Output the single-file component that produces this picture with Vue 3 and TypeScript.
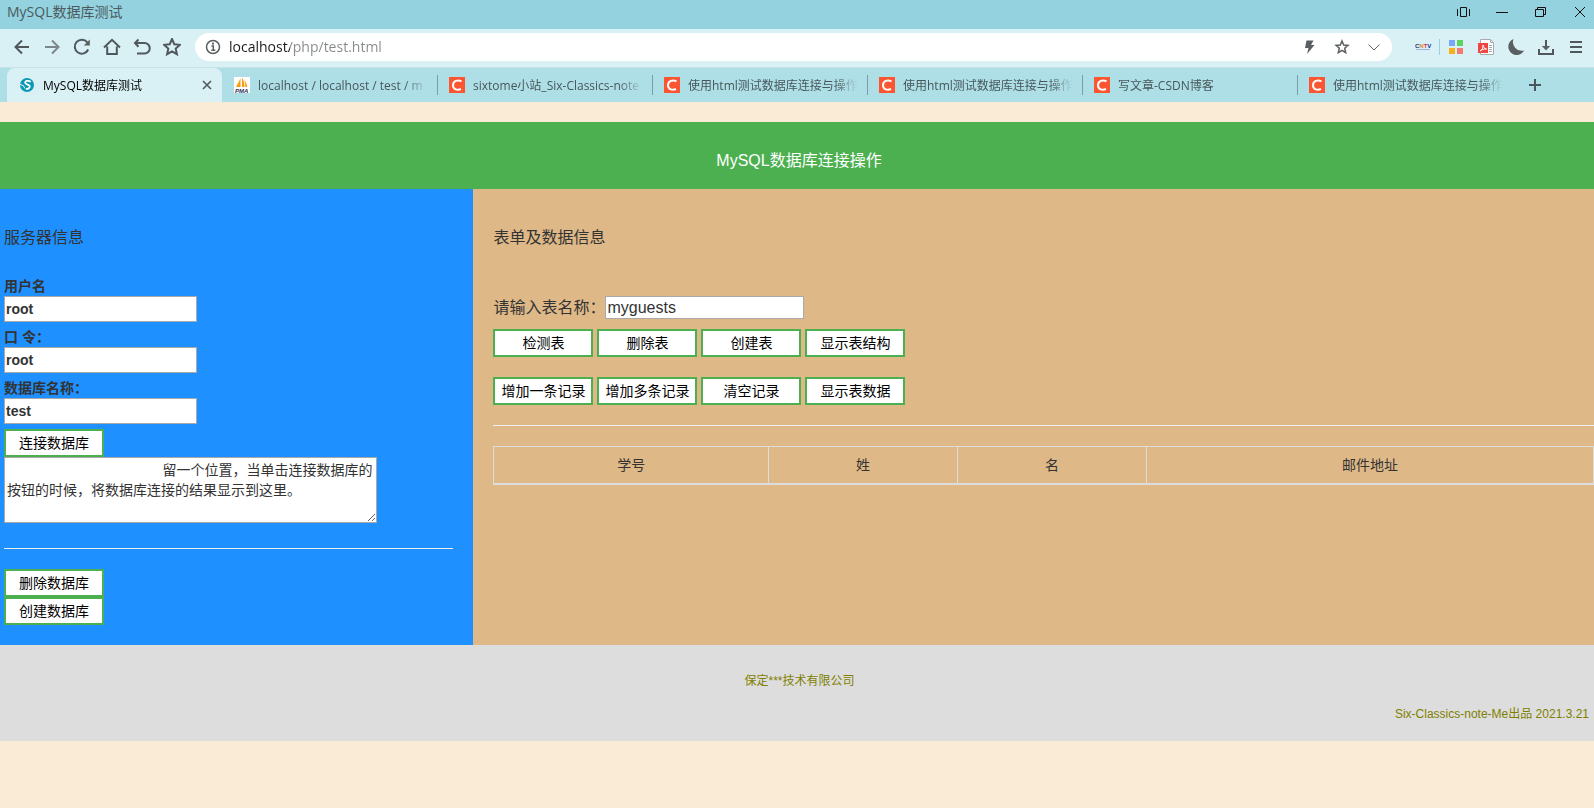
<script setup lang="ts">
import { ref } from 'vue'

interface Tab {
  title: string
  icon: 'globe' | 'pma' | 'csdn'
}

interface Field {
  id: string
  label: string
  value: string
}

const address = ref('localhost/php/test.html')
const tabs: Tab[] = [
  { title: 'MySQL数据库测试', icon: 'globe' },
  { title: 'localhost / localhost / test / m', icon: 'pma' },
  { title: 'sixtome小站_Six-Classics-note', icon: 'csdn' },
  { title: '使用html测试数据库连接与操作', icon: 'csdn' },
  { title: '使用html测试数据库连接与操作', icon: 'csdn' },
  { title: '写文章-CSDN博客', icon: 'csdn' },
  { title: '使用html测试数据库连接与操作', icon: 'csdn' },
]
const activeTab = ref(0)

const fields = ref<Field[]>([
  { id: 'user', label: '用户名', value: 'root' },
  { id: 'pass', label: '口 令：', value: 'root' },
  { id: 'dbname', label: '数据库名称：', value: 'test' },
])
const result = ref(' '.repeat(40) + '留一个位置，当单击连接数据库的按钮的时候，将数据库连接的结果显示到这里。')
const tableName = ref('myguests')
const actionRows: string[][] = [
  ['检测表', '删除表', '创建表', '显示表结构'],
  ['增加一条记录', '增加多条记录', '清空记录', '显示表数据'],
]
const columns: string[] = ['学号', '姓', '名', '邮件地址']
</script>

<template>
  <div class="window">
    <div class="titlebar">
      <span class="window-title">MySQL数据库测试</span>
      <div class="window-controls">
        <button type="button" aria-label="分屏">
          <svg width="16" height="16" viewBox="0 0 16 16"><path d="M5.5 3.5h6v9h-6zM2.5 5v7M14.5 5v7" /></svg>
        </button>
        <button type="button" aria-label="最小化">
          <svg width="16" height="16" viewBox="0 0 16 16"><path d="M2 8.5h12" /></svg>
        </button>
        <button type="button" aria-label="还原">
          <svg width="16" height="16" viewBox="0 0 16 16"><path d="M2.5 5.5h8v7h-8zM4.5 5.5v-2h8v7h-2" /></svg>
        </button>
        <button type="button" aria-label="关闭窗口">
          <svg width="16" height="16" viewBox="0 0 16 16"><path d="M3 3l10 10M13 3L3 13" /></svg>
        </button>
      </div>
    </div>

    <div class="toolbar">
      <button type="button" class="tool" aria-label="后退">
        <svg width="18" height="18" viewBox="0 0 18 18"><path d="M16 9H3M9 2.5L2.5 9l6.5 6.5" /></svg>
      </button>
      <button type="button" class="tool faded" aria-label="前进">
        <svg width="18" height="18" viewBox="0 0 18 18"><path d="M2 9h13M9 2.5L15.5 9 9 15.5" /></svg>
      </button>
      <button type="button" class="tool" aria-label="刷新">
        <svg width="18" height="18" viewBox="0 0 18 18"><path d="M15.200 11.500A7 7 0 1 1 14.300 4.300" /><path class="solid" d="M16.800 1.500v6h-6z" /></svg>
      </button>
      <button type="button" class="tool" aria-label="主页">
        <svg width="18" height="18" viewBox="0 0 18 18"><path d="M1 9.500L9 1.800l8 7.700M4.200 8.500v7.500h9.600V8.500" /></svg>
      </button>
      <button type="button" class="tool" aria-label="撤销">
        <svg width="18" height="18" viewBox="0 0 18 18"><path d="M2.500 5H11.500a5 5 0 0 1 0 10.500H4M5.500 1.500L2 5l3.500 3.800" /></svg>
      </button>
      <button type="button" class="tool" aria-label="收藏夹">
        <svg width="18" height="18" viewBox="0 0 18 18"><path d="M9 1l2.300 5.200 5.700.6-4.300 3.800 1.200 5.600L9 13.300l-4.900 2.900 1.200-5.600L1 6.800l5.700-.6z" /></svg>
      </button>

      <div class="address">
        <svg class="info" width="16" height="16" viewBox="0 0 16 16"><circle cx="8" cy="8" r="6.500" /><path d="M6.500 7H8.300v4M6.300 11.200h4" /><circle class="solid" cx="8" cy="4.700" r="1.100" /></svg>
        <input v-model="address" type="text" aria-label="地址" />
        <button type="button" aria-label="极速模式">
          <svg width="16" height="16" viewBox="0 0 16 16"><path class="fill" d="M4.500 1.500h7L9 6h3.500L5 15l1.500-6H3z" /></svg>
        </button>
        <button type="button" aria-label="收藏">
          <svg width="16" height="16" viewBox="0 0 16 16"><path d="M8 2l1.700 4 4.300.4-3.300 2.900 1 4.300L8 11.300l-3.700 2.300 1-4.300L2 6.400 6.300 6z" /></svg>
        </button>
        <button type="button" aria-label="展开">
          <svg width="16" height="16" viewBox="0 0 16 16"><path class="thin" d="M2.500 5.500L8 11l5.500-5.500" /></svg>
        </button>
      </div>

      <button type="button" class="tool" aria-label="CNTV">
        <svg class="plain" width="18" height="18" viewBox="0 0 18 18">
          <text class="cntv" x="1" y="10"><tspan fill="#12319b">C</tspan><tspan fill="#e08a1c">N</tspan><tspan fill="#d33450">T</tspan><tspan fill="#12319b">V</tspan></text>
          <path stroke="#9fb4dc" d="M2 11.500h14" />
        </svg>
      </button>
      <span class="divider"></span>
      <button type="button" class="tool" aria-label="应用">
        <svg class="plain" width="18" height="18" viewBox="0 0 18 18"><path fill="#76a7fa" d="M2 2h6v6H2z" /><path fill="#5fd35f" d="M10 2h6v6h-6z" /><path fill="#f6b01a" d="M2 10h6v6H2z" /><path fill="#f47b70" d="M10 10h6v6h-6z" /></svg>
      </button>
      <button type="button" class="tool" aria-label="PDF">
        <svg class="plain" width="18" height="18" viewBox="0 0 18 18">
          <path fill="#fff" stroke="#aaa" d="M3.500 1.500h10l3 3v12h-13z" />
          <path stroke="#aaa" fill="none" d="M12 7.500h3M12 9.500h3M12 11.500h3M12 13.500h3M13.500 1.500v3h3" />
          <path fill="#ee4640" d="M1 5h10v10H1z" />
          <path stroke="#fff" fill="none" d="M3 13c2-1 3.500-3.500 3-6C6 9 7.500 10.800 9.500 11 7 10.800 5 11.500 3 13z" />
        </svg>
      </button>
      <button type="button" class="tool" aria-label="夜间模式">
        <svg width="18" height="18" viewBox="0 0 18 18"><path class="fill" d="M6.500 1A8.300 8.300 0 1 0 17 12.500 8.800 8.800 0 0 1 6.500 1z" /></svg>
      </button>
      <button type="button" class="tool" aria-label="下载">
        <svg width="18" height="18" viewBox="0 0 18 18"><path d="M2 11v5h14v-5M9 2v7" /><path class="fill" d="M4.800 8h8.400L9 12.500z" /></svg>
      </button>
      <button type="button" class="tool" aria-label="菜单">
        <svg width="18" height="18" viewBox="0 0 18 18"><path d="M3 4h12M3 9h12M3 14h12" /></svg>
      </button>
    </div>

    <div class="tabs">
      <div v-for="(tab, i) in tabs" :key="i" class="tab" :class="{ active: i === activeTab }">
        <button type="button" class="tab-main" @click="activeTab = i">
          <svg v-if="tab.icon === 'globe'" width="16" height="16" viewBox="0 0 16 16">
            <circle cx="8" cy="8" r="7" fill="#0a9ab5" />
            <path d="M11.800 4.800C9 3 5.500 4 6.300 6s4.700 1.200 4.500 3.500-2.800 2.500-3.800 2.200" fill="none" stroke="#fff" stroke-width="1.800" />
            <path d="M1.200 7.500l3 1L6 11.500" fill="none" stroke="#fff" />
          </svg>
          <svg v-else-if="tab.icon === 'pma'" width="16" height="16" viewBox="0 0 16 16">
            <path fill="#fff" d="M0 0h16v16H0z" />
            <path fill="#f89c0e" d="M6.500 1.500L2 10h4.500zM8 .5V10h2.500C10.500 6 9.500 3 8 .5zM10 3c2 2 3 4.500 3.300 7h-2C11.300 7.500 11 5 10 3z" />
            <text class="pma" x="1" y="16">PMA</text>
          </svg>
          <svg v-else width="16" height="16" viewBox="0 0 16 16">
            <path fill="#fc5531" d="M0 0h16v16H0z" />
            <path d="M12.500 4.300C9 2.500 4 3.500 4 8.300c0 4.300 4.500 5.200 8 3.700" fill="none" stroke="#fff" stroke-width="2" />
          </svg>
          <span>{{ tab.title }}</span>
        </button>
        <button v-if="i === activeTab" type="button" class="tab-close" aria-label="关闭标签">
          <svg width="10" height="10" viewBox="0 0 10 10"><path d="M1 1l8 8M9 1L1 9" /></svg>
        </button>
      </div>
      <button type="button" class="tab-add" aria-label="新标签">
        <svg width="12" height="12" viewBox="0 0 12 12"><path d="M6 0v12M0 6h12" /></svg>
      </button>
    </div>

    <main class="page">
      <header class="banner">MySQL数据库连接操作</header>

      <div class="columns">
        <section class="server">
          <h2>服务器信息</h2>
          <div v-for="f in fields" :key="f.id" class="field">
            <label :for="f.id">{{ f.label }}</label>
            <input :id="f.id" v-model="f.value" type="text" />
          </div>
          <button type="button" class="action">连接数据库</button>
          <textarea v-model="result" rows="3" aria-label="连接结果" spellcheck="false"></textarea>
          <hr />
          <button type="button" class="action">删除数据库</button>
          <button type="button" class="action">创建数据库</button>
        </section>

        <section class="data">
          <h2>表单及数据信息</h2>
          <div class="table-name">
            <label for="tablename">请输入表名称：</label>
            <input id="tablename" v-model="tableName" type="text" />
          </div>
          <div v-for="(row, r) in actionRows" :key="r" class="actions">
            <button v-for="name in row" :key="name" type="button" class="action">{{ name }}</button>
          </div>
          <hr />
          <table>
            <thead>
              <tr>
                <th v-for="c in columns" :key="c" scope="col">{{ c }}</th>
              </tr>
            </thead>
          </table>
        </section>
      </div>

      <footer>
        <p class="company">保定***技术有限公司</p>
        <p class="credit">Six-Classics-note-Me出品 2021.3.21</p>
      </footer>
    </main>
  </div>
</template>

<style>
body {
  margin: 0;
  background: #faebd7;
}
</style>

<style scoped>
.window,
.window * {
  box-sizing: border-box;
}

.window {
  font-family: "Open Sans", "Noto Sans CJK SC", sans-serif;
}

button {
  padding: 0;
  border: 0;
  background: none;
  font-family: inherit;
}

svg {
  flex: none;
  display: block;
}

/* browser frame */
.titlebar {
  display: flex;
  align-items: center;
  justify-content: space-between;
  height: 29px;
  padding: 0 0 5px 7px;
  background: #93d2de;
  color: #4c5a5e;
  font-size: 14px;
  line-height: 20px;
}

.window-controls {
  display: flex;
  gap: 11px;
}

.window-controls button {
  display: flex;
  justify-content: center;
  width: 28px;
}

.window-controls path {
  fill: none;
  stroke: #111;
}

.toolbar {
  display: flex;
  align-items: center;
  padding: 4px 3px 6px 7px;
  border-bottom: 1px solid #c8e2e9;
  background: #d9f0f4;
}

.tool {
  display: flex;
  flex: none;
  justify-content: center;
  width: 30px;
}

.tool svg:not(.plain) path {
  fill: none;
  stroke: #50585b;
  stroke-width: 2;
}

.tool.faded svg:not(.plain) path {
  stroke: #7d878a;
}

.tool svg:not(.plain) path.solid,
.tool svg:not(.plain) path.fill,
.address path.fill {
  fill: #5a5f61;
  stroke: none;
}

.divider {
  width: 1px;
  height: 16px;
  margin: 0 1px;
  background: #93d2de;
}

.cntv {
  font: bold 6px "Liberation Sans", sans-serif;
}

.address {
  display: flex;
  flex: 1;
  align-items: center;
  height: 28px;
  margin: 0 16px 0 8px;
  padding: 0 2px 0 10px;
  border-radius: 14px;
  background: #fff;
}

.address svg {
  fill: none;
  stroke: #5a5f61;
  stroke-width: 1.5;
}

.address .thin {
  stroke-width: 1;
}

.address .solid {
  fill: #5a5f61;
  stroke: none;
}

/* host name is darker than the path behind it */
.address input {
  flex: 1;
  min-width: 0;
  height: 24px;
  margin-left: 8px;
  padding: 0;
  border: 0;
  outline: 0;
  background: linear-gradient(90deg, #1c1c1c 61px, #85898b 61px);
  background-clip: text;
  color: transparent;
  font: 14px/24px "Open Sans", sans-serif;
}

.address button {
  display: flex;
  justify-content: center;
  width: 32px;
}

.tabs {
  display: flex;
  padding-left: 7px;
  background: #aedfe7;
}

.tab {
  position: relative;
  display: flex;
  flex: 0 1 215px;
  align-items: center;
  min-width: 0;
  height: 34px;
  padding: 0 9px 0 12px;
}

.tab::after {
  content: "";
  position: absolute;
  top: 7px;
  right: -1px;
  width: 1px;
  height: 20px;
  background: #7d9da3;
}

.tab.active::after,
.tab:nth-last-child(2)::after {
  display: none;
}

.tab.active {
  border-radius: 8px 8px 0 0;
  background: #d9f0f4;
}

.tab-main {
  display: flex;
  flex: 1;
  align-items: center;
  gap: 8px;
  min-width: 0;
  color: #47575b;
  font-size: 12px;
  line-height: 20px;
}

.tab-main span {
  flex: 1;
  padding-top: 2px;
  overflow: hidden;
  text-align: left;
  white-space: nowrap;
  mask-image: linear-gradient(90deg, #000 calc(100% - 24px), transparent);
}

.active .tab-main {
  color: #000;
}

.pma {
  fill: #2f2f55;
  font: italic bold 6px "Liberation Sans", sans-serif;
}

.tab-close {
  margin-right: 1px;
}

.tab-close path {
  stroke: #50585b;
  stroke-width: 1.6;
}

.tab-add {
  display: flex;
  align-items: center;
  margin-left: 17px;
}

.tab-add path {
  stroke: #47575b;
  stroke-width: 2;
}

/* page */
.page {
  padding: 20px 0;
  color: #333;
  font-family: "Liberation Sans", "Noto Sans CJK SC", sans-serif;
  font-size: 14px;
  line-height: 20px;
}

.banner {
  padding: 27px 0 16px 4px;
  background: #4caf50;
  color: #fff;
  font-size: 16px;
  line-height: 24px;
  text-align: center;
}

.columns {
  display: grid;
  grid-template-columns: 29.7% 1fr;
}

h2 {
  margin: 0 0 26px;
  font-size: 16px;
  font-weight: normal;
  line-height: 24px;
}

hr {
  height: 1px;
  margin: 20px 0;
  border: 0;
  background: #eee;
}

.server {
  padding: 37px 20px 20px 4px;
  background: #1e90ff;
}

.field {
  display: flex;
  flex-direction: column;
  align-items: flex-start;
  margin-bottom: 5px;
  font-weight: bold;
}

.page input,
textarea {
  border: 1px solid #a9a9a9;
  outline: 0;
  background: #fff;
  color: #333;
}

.field input {
  width: 193px;
  height: 26px;
  padding: 1px;
  font: bold 14px/20px "Liberation Sans", "Noto Sans CJK SC", sans-serif;
}

.action {
  display: block;
  width: 100px;
  height: 28px;
  border: 2px solid #4caf50;
  background: #fff;
  color: #000;
  font-size: 14px;
  line-height: 20px;
  white-space: nowrap;
}

textarea {
  display: block;
  width: 373px;
  max-width: 100%;
  margin-bottom: 25px;
  padding: 2px;
  font: inherit;
  resize: both;
}

.data {
  padding: 37px 0 20px 20px;
  background: #deb887;
}

.data h2 {
  margin-bottom: 46px;
}

.table-name {
  display: flex;
  align-items: center;
  margin-bottom: 10px;
  font-size: 16px;
}

.table-name input {
  width: 199px;
  height: 23px;
  padding: 1px;
  font: 16px/20px "Liberation Sans", "Noto Sans CJK SC", sans-serif;
}

.actions {
  display: flex;
  gap: 4px;
  margin-bottom: 20px;
}

table {
  width: 100%;
  border: 1px solid #ddd;
  border-spacing: 0;
  table-layout: fixed;
}

th {
  padding: 8px;
  border-right: 1px solid #ddd;
  border-bottom: 1px solid #ddd;
  font-weight: normal;
  text-align: center;
}

th:first-child {
  width: 25%;
}

th:nth-child(2),
th:nth-child(3) {
  width: 17.2%;
}

th:last-child {
  border-right: 0;
}

footer {
  padding: 26px 5px 17px 10px;
  background: #ddd;
  color: #808000;
  font-size: 12px;
}

footer p {
  margin: 0;
}

.company {
  margin-bottom: 13px;
  text-align: center;
}

.credit {
  text-align: right;
}
</style>
